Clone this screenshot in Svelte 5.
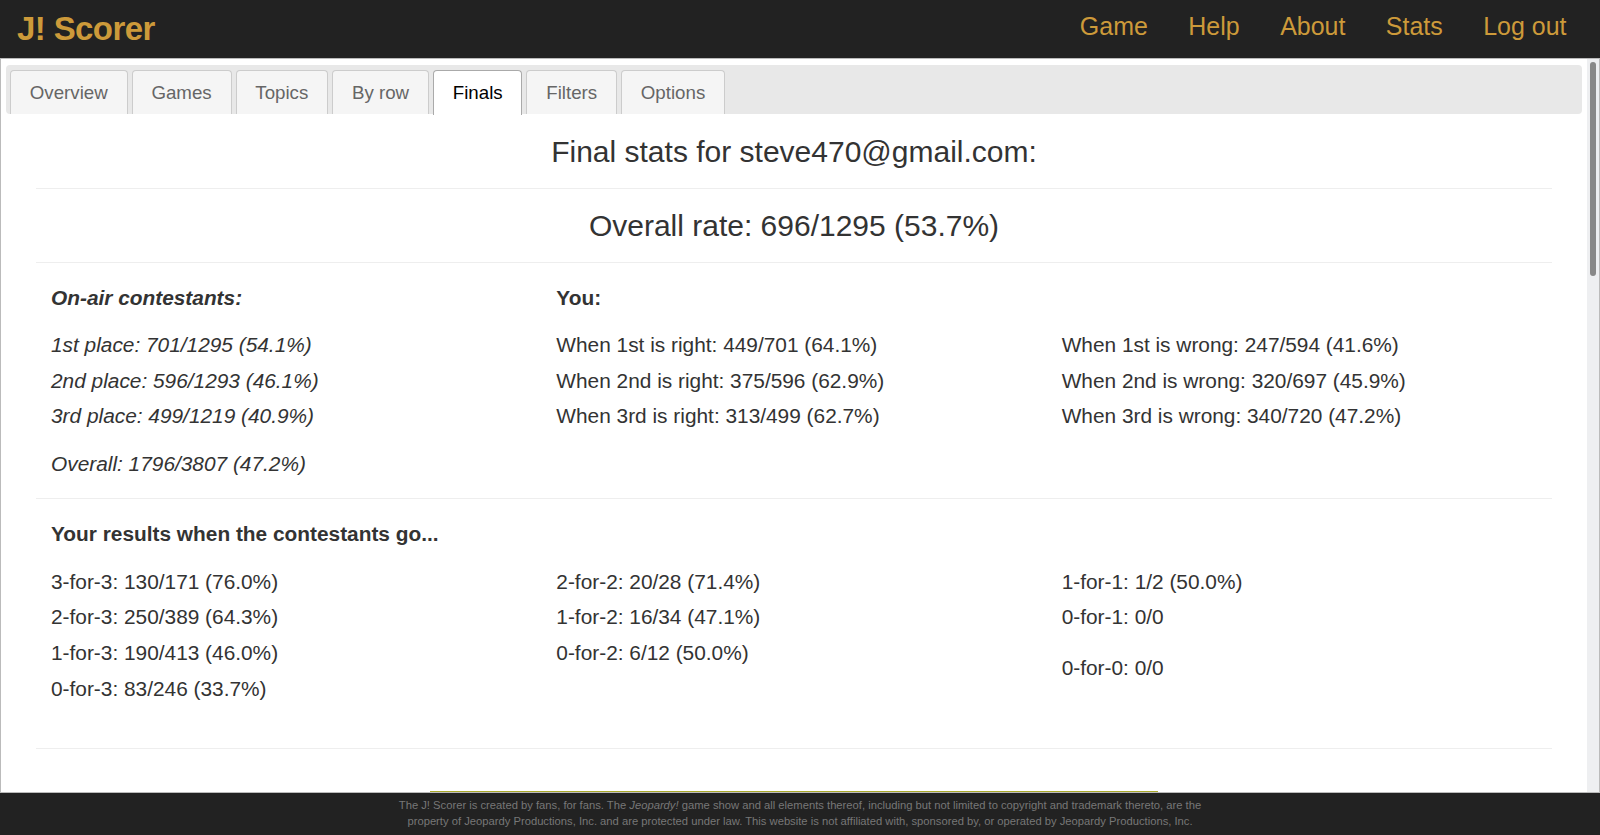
<script>
  const navLinks = ['Game', 'Help', 'About', 'Stats', 'Log out'];
  const tabs = ['Overview', 'Games', 'Topics', 'By row', 'Finals', 'Filters', 'Options'];
  const activeTab = 'Finals';

  const onAir = ['1st place: 701/1295 (54.1%)', '2nd place: 596/1293 (46.1%)', '3rd place: 499/1219 (40.9%)'];
  const whenRight = ['When 1st is right: 449/701 (64.1%)', 'When 2nd is right: 375/596 (62.9%)', 'When 3rd is right: 313/499 (62.7%)'];
  const whenWrong = ['When 1st is wrong: 247/594 (41.6%)', 'When 2nd is wrong: 320/697 (45.9%)', 'When 3rd is wrong: 340/720 (47.2%)'];

  const threeFor = ['3-for-3: 130/171 (76.0%)', '2-for-3: 250/389 (64.3%)', '1-for-3: 190/413 (46.0%)', '0-for-3: 83/246 (33.7%)'];
  const twoFor = ['2-for-2: 20/28 (71.4%)', '1-for-2: 16/34 (47.1%)', '0-for-2: 6/12 (50.0%)'];
  const oneFor = ['1-for-1: 1/2 (50.0%)', '0-for-1: 0/0'];
</script>

<div class="page">
  <nav class="navbar">
    <a class="brand" href="#top">J! Scorer</a>
    <ul class="nav-links">
      {#each navLinks as link}
        <li><a href="#top">{link}</a></li>
      {/each}
    </ul>
  </nav>

  <main class="main">
    <div class="scroller">
      <div class="tab-bar">
        {#each tabs as tab}
          <button class="tab" class:active={tab === activeTab}>{tab}</button>
        {/each}
      </div>

      <div class="content">
        <h2 class="title">Final stats for steve470@gmail.com:</h2>
        <hr />
        <h2 class="title rate">Overall rate: 696/1295 (53.7%)</h2>
        <hr />

        <div class="grid">
          <div class="col">
            <p class="head"><b><i>On-air contestants:</i></b></p>
            <div class="group italic">
              {#each onAir as line}<p>{line}</p>{/each}
            </div>
            <div class="group italic"><p>Overall: 1796/3807 (47.2%)</p></div>
          </div>
          <div class="col">
            <p class="head"><b>You:</b></p>
            <div class="group">
              {#each whenRight as line}<p>{line}</p>{/each}
            </div>
          </div>
          <div class="col">
            <p class="head">&nbsp;</p>
            <div class="group">
              {#each whenWrong as line}<p>{line}</p>{/each}
            </div>
          </div>
        </div>
        <hr />

        <div class="single"><p class="head"><b>Your results when the contestants go...</b></p></div>
        <div class="grid results">
          <div class="col">
            <div class="group">
              {#each threeFor as line}<p>{line}</p>{/each}
            </div>
          </div>
          <div class="col">
            <div class="group">
              {#each twoFor as line}<p>{line}</p>{/each}
            </div>
          </div>
          <div class="col">
            <div class="group wide">
              {#each oneFor as line}<p>{line}</p>{/each}
            </div>
            <div class="group"><p>0-for-0: 0/0</p></div>
          </div>
        </div>
        <hr />

        <div class="chart"></div>
      </div>
    </div>

    <div class="scrollbar"><div class="thumb"></div></div>
  </main>

  <footer class="footer">
    <p>
      The J! Scorer is created by fans, for fans. The <i>Jeopardy!</i> game show and all elements thereof, including but not limited to copyright and trademark thereto, are the<br />
      property of Jeopardy Productions, Inc. and are protected under law. This website is not affiliated with, sponsored by, or operated by Jeopardy Productions, Inc.
    </p>
  </footer>
</div>

<style>
  :global(body) {
    overflow: hidden;
    font-family: "Liberation Sans", Arial, sans-serif;
    color: #333;
  }

  .page {
    display: flex;
    flex-direction: column;
    height: 100vh;
  }

  .navbar {
    flex: none;
    display: flex;
    justify-content: space-between;
    align-items: center;
    height: 58px;
    background: #222;
    padding: 0 33.5px 0 17px;
  }

  .brand {
    font-size: 33px;
    font-weight: bold;
    letter-spacing: -0.6px;
    color: #cd9a3a;
    text-decoration: none;
  }

  .nav-links {
    display: flex;
    gap: 40.5px;
    list-style: none;
    margin: 0 0 6px;
    padding: 0;
  }

  .nav-links a {
    font-size: 24.96px;
    color: #cd9a3a;
    text-decoration: none;
  }

  .main {
    flex: 1;
    min-height: 0;
    display: flex;
    border: 1px solid #bbb;
    background: #fff;
  }

  .scroller {
    flex: 1;
    min-width: 0;
    overflow: hidden;
    padding-top: 6px;
  }

  .scrollbar {
    flex: none;
    width: 12px;
    box-sizing: border-box;
    padding: 3px 3px 0;
    background: #eeeff1;
  }

  .thumb {
    height: 214px;
    background: #888;
    border-radius: 3px;
  }

  .tab-bar {
    display: flex;
    gap: 4px;
    height: 49px;
    box-sizing: border-box;
    margin: 0 5px;
    padding: 5px 0 0 4px;
    background: #e8e8e8;
    border-radius: 4px;
  }

  .tab {
    height: 44px;
    padding: 0 18.82px;
    font: 18.72px "Liberation Sans", Arial, sans-serif;
    color: #666;
    background: #f5f5f5;
    border: 1px solid #ccc;
    border-bottom: none;
    border-radius: 4px 4px 0 0;
  }

  .tab.active {
    height: 45px;
    padding-bottom: 1px;
    color: #000;
    background: #fff;
    border-color: #aaa;
  }

  .content {
    padding: 0 35px;
  }

  .title {
    margin: 0;
    padding: 19px 0 17px;
    font-size: 30px;
    font-weight: normal;
    line-height: 38px;
    text-align: center;
  }

  .rate {
    padding-top: 18px;
  }

  hr {
    height: 1px;
    margin: 0;
    border: none;
    background: #eee;
  }

  .grid {
    display: grid;
    grid-template-columns: repeat(3, 1fr);
    padding: 20px 0 14px;
  }

  .grid.results {
    padding: 0 0 39.15px;
  }

  .col,
  .single {
    padding: 0 15px;
  }

  .single {
    padding-top: 20px;
  }

  p {
    margin: 0;
    font-size: 20.85px;
    line-height: 30px;
  }

  .head {
    margin-bottom: 17px;
  }

  .single .head {
    margin-bottom: 17.45px;
  }

  .group {
    margin-bottom: 12.3px;
  }

  .group.wide {
    margin-bottom: 15.3px;
  }

  .group p {
    padding-bottom: 5.55px;
  }

  .group:last-child {
    margin-bottom: 0;
  }

  .italic {
    font-style: italic;
  }

  .chart {
    height: 1600px;
    margin: 42px 394px 0;
    border-top: 1px solid #a8a82a;
  }

  .footer {
    flex: none;
    height: 42px;
    background: #222;
    text-align: center;
    padding-top: 5px;
    box-sizing: border-box;
  }

  .footer p {
    font-size: 11.23px;
    line-height: 15.5px;
    color: #777;
  }
</style>
